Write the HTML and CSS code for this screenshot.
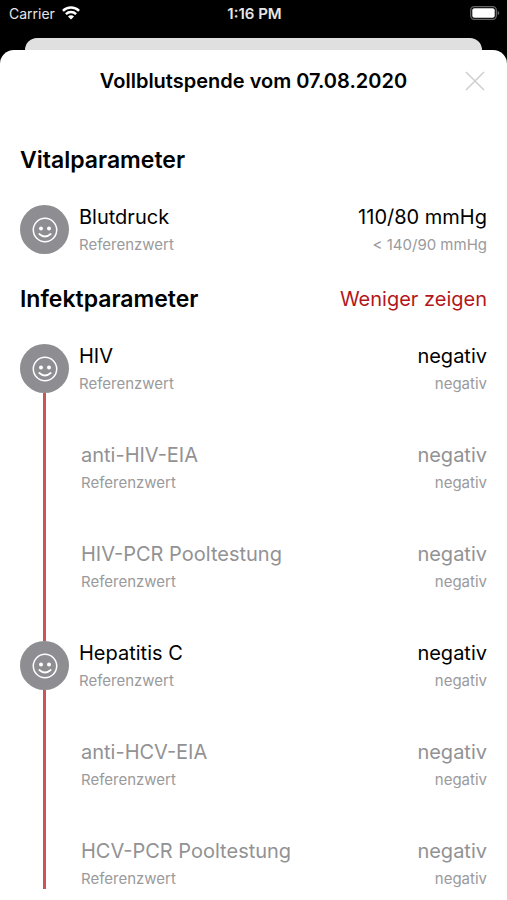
FILE: index.html
```html
<!DOCTYPE html>
<html lang="de">
<head>
<meta charset="utf-8">
<meta name="viewport" content="width=device-width, initial-scale=1">
<title>Vollblutspende vom 07.08.2020</title>
<link rel="stylesheet" href="styles.css">
</head>
<body>
<svg class="defs" aria-hidden="true">
  <symbol id="smiley" viewBox="0 0 26 26">
    <circle cx="13" cy="13" r="11.7" fill="none" stroke="#fff" stroke-width="1.5"/>
    <circle cx="9" cy="11.500" r="2" fill="#fff"/>
    <circle cx="17" cy="11.500" r="2" fill="#fff"/>
    <path d="M7.300 17q5.700 5 11.400 0" fill="none" stroke="#fff" stroke-width="1.700" stroke-linecap="round"/>
  </symbol>
</svg>

<div class="status">
  <div class="status-left">
    <span>Carrier</span>
    <svg width="18" height="14" viewBox="0 0 18 14" fill="none" stroke="#fff" stroke-width="2.500" aria-hidden="true">
      <path d="M.9 4.900a11.500 11.500 0 0 1 16.200 0"/>
      <path d="M3.900 8.200a7.300 7.300 0 0 1 10.200 0"/>
      <path d="M9 13.600 6 10.600a4.200 4.200 0 0 1 6 0z" fill="#fff" stroke="none"/>
    </svg>
  </div>
  <span class="time">1:16 PM</span>
  <div class="status-right">
    <svg width="30" height="14" viewBox="0 0 30 14" aria-hidden="true">
      <rect x=".7" y=".7" width="25.600" height="12.600" rx="3.500" fill="none" stroke="#666" stroke-width="1.300"/>
      <rect x="2.300" y="2.300" width="22.400" height="9.400" rx="2" fill="#fff"/>
      <path d="M27.600 4.800q1.700.7 1.700 2.200t-1.700 2.200z" fill="#666"/>
    </svg>
  </div>
</div>
<div class="card-behind"></div>

<main class="sheet">
  <header class="sheet-header">
    <h1>Vollblutspende vom 07.08.2020</h1>
    <button class="close" type="button" aria-label="Schließen">
      <svg width="20" height="20" viewBox="0 0 20 20" fill="none" stroke="#d0d0d0" stroke-width="1.600" aria-hidden="true"><path d="M1 1l18 18M19 1 1 19"/></svg>
    </button>
  </header>

  <section>
    <div class="section-head"><h2>Vitalparameter</h2></div>
    <div class="group">
      <div class="rail"><span class="badge"><svg><use href="#smiley"/></svg></span></div>
      <div class="rows">
        <div class="row"><span>Blutdruck</span><span>110/80 mmHg</span><small>Referenzwert</small><small>&lt; 140/90 mmHg</small></div>
      </div>
    </div>
  </section>

  <section>
    <div class="section-head"><h2>Infektparameter</h2><button class="toggle" type="button">Weniger zeigen</button></div>
    <div class="group linked">
      <div class="rail"><span class="badge"><svg><use href="#smiley"/></svg></span></div>
      <div class="rows">
        <div class="row"><span>HIV</span><span>negativ</span><small>Referenzwert</small><small>negativ</small></div>
        <div class="row detail"><span>anti-HIV-EIA</span><span>negativ</span><small>Referenzwert</small><small>negativ</small></div>
        <div class="row detail"><span>HIV-PCR Pooltestung</span><span>negativ</span><small>Referenzwert</small><small>negativ</small></div>
      </div>
    </div>
    <div class="group linked">
      <div class="rail"><span class="badge"><svg><use href="#smiley"/></svg></span></div>
      <div class="rows">
        <div class="row"><span>Hepatitis C</span><span>negativ</span><small>Referenzwert</small><small>negativ</small></div>
        <div class="row detail"><span>anti-HCV-EIA</span><span>negativ</span><small>Referenzwert</small><small>negativ</small></div>
        <div class="row detail"><span>HCV-PCR Pooltestung</span><span>negativ</span><small>Referenzwert</small><small>negativ</small></div>
      </div>
    </div>
  </section>
</main>
</body>
</html>
```
FILE: styles.css
```css
* { box-sizing: border-box; }

body {
  margin: 0;
  min-height: 100vh;
  display: flex;
  flex-direction: column;
  background: #000;
  color: #000;
  font-family: Inter, "Liberation Sans", sans-serif;
}

h1, h2 { margin: 0; font-weight: 600; }

button {
  padding: 0;
  border: 0;
  background: none;
  font: inherit;
  cursor: pointer;
}

.defs { display: none; }

.status {
  display: grid;
  grid-template-columns: 1fr auto 1fr;
  align-items: center;
  height: 26px;
  padding: 0 7px 0 9px;
  color: #e6e6e6;
  font-size: 14px;
}
.status-left { display: flex; align-items: center; gap: 7px; }
.status-right { display: flex; justify-content: flex-end; }
.time { font-size: 15px; font-weight: 600; }

.card-behind {
  height: 12px;
  margin: 12px 25px 0;
  border-radius: 12px 12px 0 0;
  background: #e0e0e0;
}

.sheet {
  flex: 1;
  padding: 16px 20px 10px;
  border-radius: 14px 14px 0 0;
  background: #fff;
}

.sheet-header {
  display: grid;
  grid-template-columns: 24px 1fr 24px;
  align-items: center;
  height: 30px;
  margin-bottom: 49px;
}
.sheet-header h1 {
  grid-column: 2;
  font-size: 20px;
  line-height: 30px;
  text-align: center;
}
.close { display: flex; justify-content: center; }

.section-head {
  display: flex;
  align-items: center;
  justify-content: space-between;
  margin-bottom: 30px;
  line-height: 30px;
}
.section-head h2 { font-size: 23px; }
.toggle { color: #b3161b; font-size: 20px; }

section + section { margin-top: 29px; }

.group { display: grid; grid-template-columns: 49px 1fr; column-gap: 10px; }

.rail { display: flex; flex-direction: column; align-items: center; }
.linked .rail::after {
  content: "";
  flex: 1;
  width: 3px;
  background: #cb5458;
}
.linked:not(:last-child) .rows { padding-bottom: 49px; }

.badge {
  display: flex;
  align-items: center;
  justify-content: center;
  width: 49px;
  height: 49px;
  border-radius: 50%;
  background: #8e8d92;
}
.badge svg { width: 26px; height: 26px; }

.rows { display: flex; flex-direction: column; gap: 49px; }

.row {
  display: grid;
  grid-template-columns: 1fr auto;
  row-gap: 6px;
  font-size: 20px;
  line-height: 24px;
}
.row > :nth-child(even) { text-align: right; }
.row small { color: #9a9a9c; font-size: 15px; line-height: 20px; }
.detail { padding-left: 2px; color: #929294; }
```
